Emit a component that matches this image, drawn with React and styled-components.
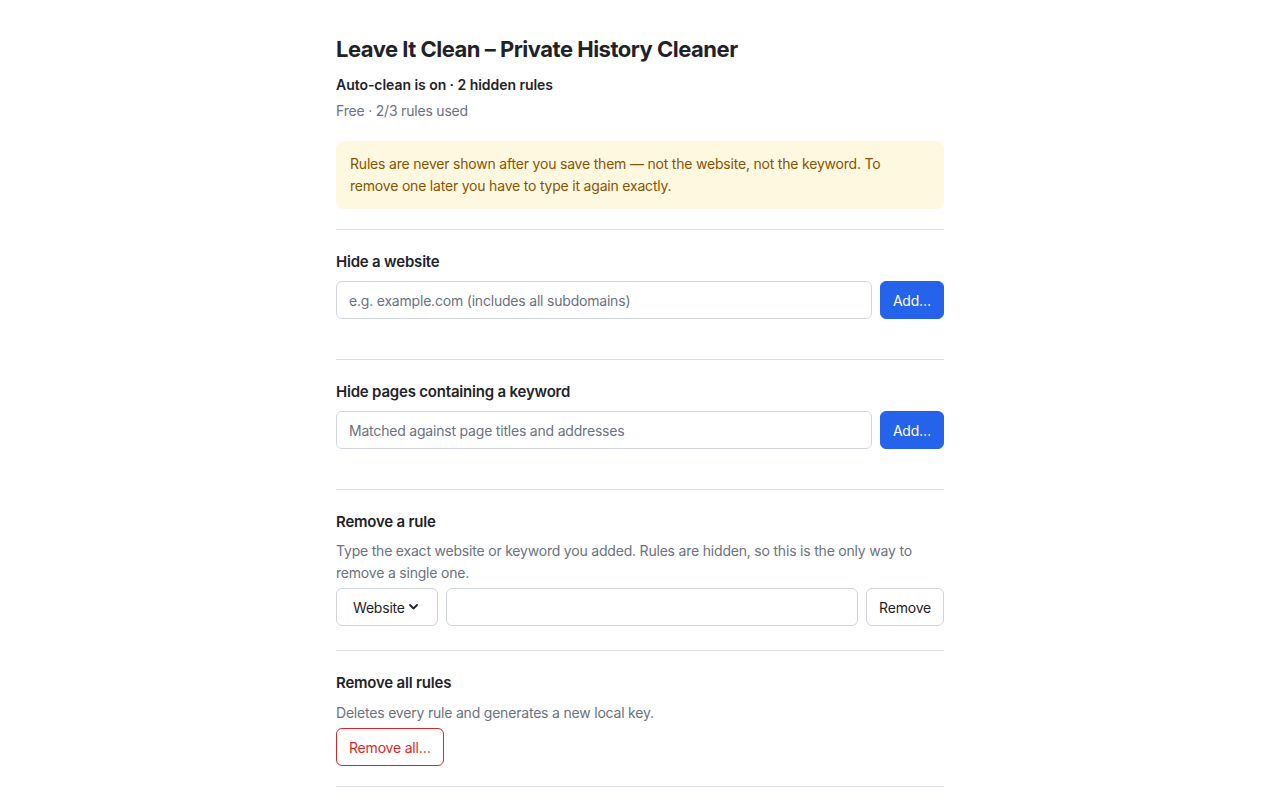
import React from "react";
import styled, {createGlobalStyle} from "styled-components";

const GlobalStyle = createGlobalStyle`
  body {
    margin: 0;
    background: #ffffff;
    font-family: Inter, "Noto Sans", sans-serif;
    letter-spacing: -0.2px;
    color: #1f2328;
  }
`;

const Page = styled.div`
  width: 608px;
  margin: 0 auto;
  padding-top: 34px;
`;

const Title = styled.h1`
  margin: 0;
  font-size: 22px;
  line-height: 30px;
  font-weight: 650;
  letter-spacing: -0.5px;
`;

const Status = styled.div`
  margin-top: 11px;
  font-size: 14px;
  line-height: 20px;
  font-weight: 600;
  letter-spacing: -0.05px;
`;

const Plan = styled.div`
  margin-top: 6px;
  font-size: 14px;
  line-height: 20px;
  color: #6b7280;
`;

const Notice = styled.div`
  margin-top: 20px;
  margin-bottom: 20px;
  padding: 12px 14px;
  background: #fef8e1;
  color: #8a5300;
  border-radius: 8px;
  font-size: 14px;
  line-height: 22px;
`;

const Section = styled.section`
  border-top: 1px solid #dcdfe3;
  padding: 21px 0 ${(props) => props.bottom || 20}px;

  &:last-child {
    border-bottom: 1px solid #dcdfe3;
  }
`;

const Heading = styled.h2`
  margin: 0 0 ${(props) => props.gap || 8}px;
  font-size: 15px;
  line-height: 22px;
  font-weight: 600;
`;

const Help = styled.p`
  margin: 0 0 4px;
  font-size: 14px;
  line-height: 22px;
  color: #6b7280;
`;

const Row = styled.div`
  display: flex;
  gap: 8px;
`;

const TextInput = styled.input`
  flex: 1;
  min-width: 0;
  height: 38px;
  box-sizing: border-box;
  padding: 0 12px;
  border: 1px solid #d0d5dc;
  border-radius: 6px;
  font-family: inherit;
  font-size: 14px;
  letter-spacing: -0.2px;
  color: #1f2328;
  background: #fff;

  &::placeholder {
    color: #6b7280;
  }
`;

const SelectWrap = styled.div`
  position: relative;
  width: 102px;
  flex: none;
`;

const Select = styled.select`
  appearance: none;
  width: 100%;
  height: 38px;
  box-sizing: border-box;
  padding: 0 24px 0 16px;
  border: 1px solid #d0d5dc;
  border-radius: 6px;
  background: #fff;
  font-family: inherit;
  font-size: 14px;
  letter-spacing: -0.2px;
  color: #1f2328;
`;

const Chevron = styled.svg`
  position: absolute;
  right: 20px;
  top: 16px;
  pointer-events: none;
`;

const Button = styled.button`
  flex: none;
  height: 38px;
  box-sizing: border-box;
  padding: 0 12px;
  border-radius: 6px;
  font-family: inherit;
  font-size: 14px;
  letter-spacing: -0.2px;
  cursor: pointer;
  background: ${(props) => (props.$variant === "primary" ? "#2563eb" : "#fff")};
  color: ${(props) =>
    props.$variant === "primary" ? "#fff" : props.$variant === "danger" ? "#dc2626" : "#1f2328"};
  border: 1px solid
    ${(props) =>
      props.$variant === "primary" ? "#2563eb" : props.$variant === "danger" ? "#dc2626" : "#d0d5dc"};
`;

export default function App() {
  return (
    <>
      <GlobalStyle />
      <Page>
        <Title>Leave It Clean – Private History Cleaner</Title>
        <Status>Auto-clean is on · 2 hidden rules</Status>
        <Plan>Free · 2/3 rules used</Plan>
        <Notice>
          Rules are never shown after you save them — not the website, not the keyword. To remove one
          later you have to type it again exactly.
        </Notice>

        <Section bottom={40}>
          <Heading>Hide a website</Heading>
          <Row>
            <TextInput placeholder="e.g. example.com (includes all subdomains)" />
            <Button $variant="primary">Add…</Button>
          </Row>
        </Section>

        <Section bottom={40}>
          <Heading>Hide pages containing a keyword</Heading>
          <Row>
            <TextInput placeholder="Matched against page titles and addresses" />
            <Button $variant="primary">Add…</Button>
          </Row>
        </Section>

        <Section bottom={24}>
          <Heading gap={7}>Remove a rule</Heading>
          <Help>
            Type the exact website or keyword you added. Rules are hidden, so this is the only way to
            remove a single one.
          </Help>
          <Row>
            <SelectWrap>
              <Select defaultValue="website">
                <option value="website">Website</option>
                <option value="keyword">Keyword</option>
              </Select>
              <Chevron width="9" height="6" viewBox="0 0 9 6">
                <path d="M1 1l3.5 3.5L8 1" fill="none" stroke="#1f2328" strokeWidth="1.8" strokeLinecap="round" strokeLinejoin="round" />
              </Chevron>
            </SelectWrap>
            <TextInput />
            <Button>Remove</Button>
          </Row>
        </Section>

        <Section>
          <Heading>Remove all rules</Heading>
          <Help>Deletes every rule and generates a new local key.</Help>
          <Button $variant="danger">Remove all…</Button>
        </Section>
      </Page>
    </>
  );
}
